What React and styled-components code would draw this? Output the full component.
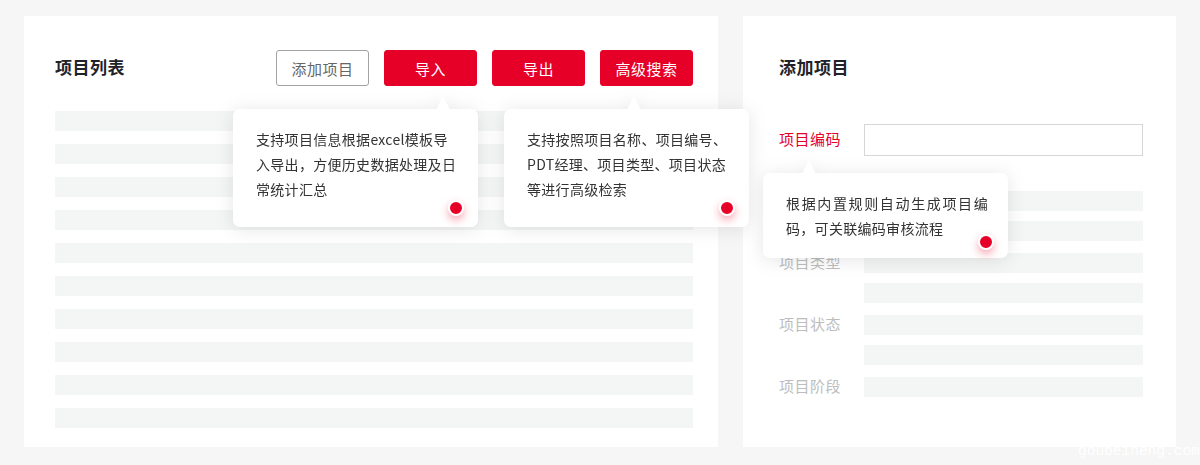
import React from "react";
import styled, { createGlobalStyle } from "styled-components";

const GlobalStyle = createGlobalStyle`
  html, body {
    margin: 0;
    padding: 0;
    background: #f5f6f5;
    font-family: "Noto Sans CJK SC", "Noto Sans", sans-serif;
  }
  * {
    box-sizing: border-box;
  }
`;

const Page = styled.div`
  position: relative;
  width: 1200px;
  height: 465px;
  overflow: hidden;
  display: flex;
  gap: 25px;
  padding: 16px 24px 0 24px;
`;

const Panel = styled.section`
  background: #fff;
  height: 431px;
  width: ${(p) => p.$width}px;
  padding: ${(p) => p.$padding};
`;

const Header = styled.div`
  display: flex;
  align-items: center;
  justify-content: space-between;
  height: 36px;
`;

const Title = styled.h2`
  margin: -3px 0 0;
  font-size: 17px;
  font-weight: 700;
  letter-spacing: 0.5px;
  color: #1f2329;
`;

const Actions = styled.div`
  display: flex;
  gap: 15px;
`;

const Anchor = styled.div`
  position: relative;
`;

const Button = styled.button`
  width: 93px;
  height: 36px;
  border-radius: 3px;
  font-family: inherit;
  font-size: 15px;
  letter-spacing: 0.5px;
  cursor: pointer;
  border: 1px solid ${(p) => (p.$outline ? "#a3a3a3" : "#e60027")};
  background: ${(p) => (p.$outline ? "#fff" : "#e60027")};
  color: ${(p) => (p.$outline ? "#666" : "#fff")};
`;

const Rows = styled.div`
  margin-top: 25px;
  display: flex;
  flex-direction: column;
  gap: 13px;
`;

const Bar = styled.div`
  height: ${(p) => p.$height || 20}px;
  background: ${(p) => (p.$input ? "#fff" : "#f4f5f5")};
  border: ${(p) => (p.$input ? "1px solid #d6d6d6" : "none")};
`;

const Form = styled.div`
  margin-top: 38px;
  display: flex;
  flex-direction: column;
`;

const FieldRow = styled.div`
  position: relative;
  display: grid;
  grid-template-columns: 85px 1fr;
  align-items: center;
`;

const Label = styled.span`
  font-size: 15px;
  letter-spacing: 0.5px;
  line-height: 20px;
  margin-top: -2px;
  color: ${(p) => (p.$active ? "#e60027" : "#bdbdbd")};
`;

const Groups = styled.div`
  margin-top: 35px;
  display: flex;
  flex-direction: column;
  gap: 12px;
`;

const Group = styled.div`
  display: flex;
  flex-direction: column;
  gap: 10px;
`;

const Tip = styled.div`
  position: absolute;
  z-index: 5;
  left: ${(p) => p.$left}px;
  top: ${(p) => p.$top}px;
  width: 245px;
  height: ${(p) => p.$height}px;
  padding: 18px 23px 0;
  background: #fff;
  border-radius: 7px;
  filter: drop-shadow(0 2px 9px rgba(0, 0, 0, 0.1));

  &::before {
    content: "";
    position: absolute;
    top: -13px;
    left: ${(p) => p.$arrow - 7}px;
    border-left: 7px solid transparent;
    border-right: 7px solid transparent;
    border-bottom: 14px solid #fff;
  }
`;

const TipLine = styled.div`
  width: 202px;
  font-size: 14px;
  line-height: 25px;
  letter-spacing: 0.3px;
  color: #333;
  white-space: nowrap;
  text-align: ${(p) => (p.$spread ? "justify" : "left")};
  text-align-last: ${(p) => (p.$spread ? "justify" : "auto")};
`;

const Dot = styled.span`
  position: absolute;
  right: 14px;
  bottom: ${(p) => p.$bottom}px;
  width: 16px;
  height: 16px;
  border-radius: 50%;
  background: #e60027;
  border: 2px solid #fff;
  box-shadow: 0 4px 9px rgba(230, 0, 39, 0.35);
`;

const Watermark = styled.span`
  position: absolute;
  left: 1078px;
  top: 443px;
  font-family: "Liberation Mono", monospace;
  font-size: 14.5px;
  color: #fff;
  white-space: nowrap;
`;

const Tooltip = ({ left, top, height, arrow, dotBottom, lines }) => (
  <Tip $left={left} $top={top} $height={height} $arrow={arrow}>
    {lines.map((l, i) => (
      <TipLine key={i} $spread={l.spread}>
        {l.text}
      </TipLine>
    ))}
    <Dot $bottom={dotBottom} />
  </Tip>
);

// first label sits under the tooltip in the design, so it stays blank
const groups = [
  ["", true],
  ["项目类型", true],
  ["项目状态", true],
  ["项目阶段", false],
];

export default function App() {
  return (
    <>
      <GlobalStyle />
      <Page>
        <Panel $width={694} $padding="34px 25px 0 31px">
          <Header>
            <Title>项目列表</Title>
            <Actions>
              <Button $outline>添加项目</Button>
              <Anchor>
                <Button>导入</Button>
                <Tooltip
                  left={-151}
                  top={59}
                  height={118}
                  arrow={210}
                  dotBottom={11}
                  lines={[
                    { text: "支持项目信息根据excel模板导" },
                    { text: "入导出，方便历史数据处理及日" },
                    { text: "常统计汇总" },
                  ]}
                />
              </Anchor>
              <Button>导出</Button>
              <Anchor>
                <Button>高级搜索</Button>
                <Tooltip
                  left={-96}
                  top={59}
                  height={118}
                  arrow={130}
                  dotBottom={11}
                  lines={[
                    { text: "支持按照项目名称、项目编号、" },
                    { text: "PDT经理、项目类型、项目状态" },
                    { text: "等进行高级检索" },
                  ]}
                />
              </Anchor>
            </Actions>
          </Header>
          <Rows>
            {Array.from({ length: 10 }).map((_, i) => (
              <Bar key={i} />
            ))}
          </Rows>
        </Panel>

        <Panel $width={433} $padding="34px 33px 0 36px">
          <Header>
            <Title>添加项目</Title>
          </Header>
          <Form>
            <FieldRow>
              <Label $active>项目编码</Label>
              <Bar $input $height={32} />
              <Tooltip
                left={-16}
                top={49}
                height={85}
                arrow={46}
                dotBottom={8}
                lines={[
                  { text: "根据内置规则自动生成项目编", spread: true },
                  { text: "码，可关联编码审核流程" },
                ]}
              />
            </FieldRow>
            <Groups>
              {groups.map(([name, extra], i) => (
                <Group key={i}>
                  <FieldRow>
                    <Label>{name}</Label>
                    <Bar />
                  </FieldRow>
                  {extra && (
                    <FieldRow>
                      <span />
                      <Bar />
                    </FieldRow>
                  )}
                </Group>
              ))}
            </Groups>
          </Form>
        </Panel>
        <Watermark>goubeineng.com</Watermark>
      </Page>
    </>
  );
}
